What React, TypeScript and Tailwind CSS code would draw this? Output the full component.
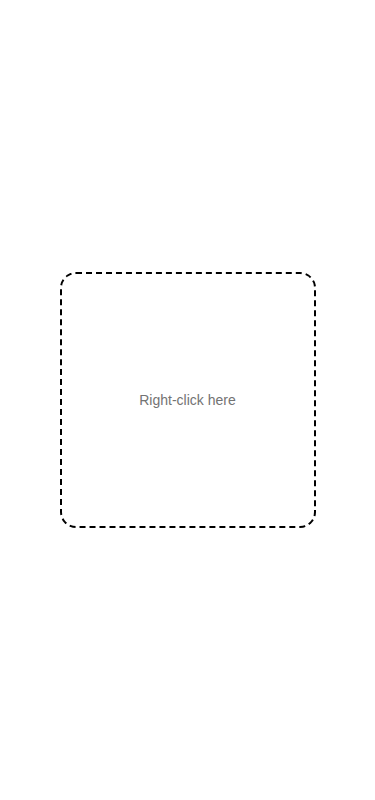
export default function App() {
  return (
    <div className="flex min-h-screen items-center justify-center bg-white" style={{ fontFamily: '"Liberation Sans", Arial, sans-serif' }}>
      <div className="flex h-64 w-64 items-center justify-center rounded-2xl border-2 border-dashed border-black">
        <span className="text-sm text-[#737373]">Right-click here</span>
      </div>
    </div>
  )
}
